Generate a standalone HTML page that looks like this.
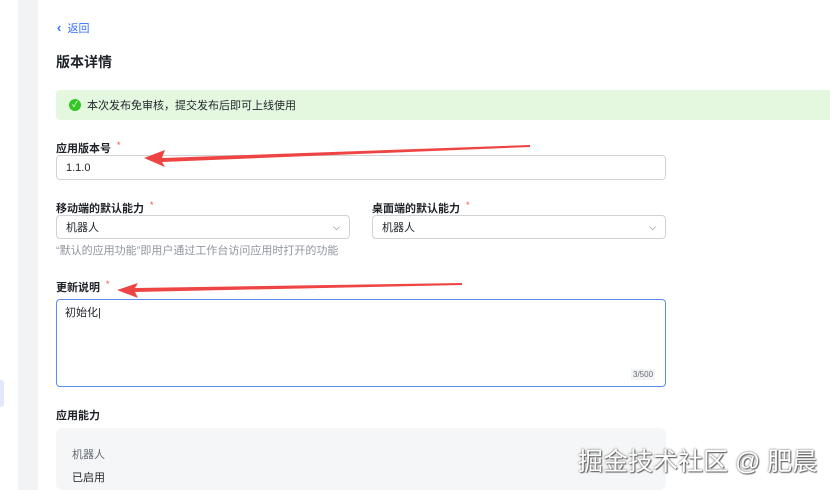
<!DOCTYPE html>
<html><head><meta charset="utf-8"><style>
*{margin:0;padding:0;box-sizing:border-box}
body{width:830px;height:490px;overflow:hidden;background:#fff;position:relative;font-family:"Liberation Sans","Noto Sans CJK SC",sans-serif;color:#1f2329}
.abs{position:absolute}
.lbl{font-size:11px;font-weight:bold;color:#1f2329}
.star{color:#f54a45;font-weight:normal;margin-left:6px;font-size:9px;vertical-align:top}
.box{position:absolute;border:1px solid #d0d3d6;border-radius:4px;background:#fff;font-size:11px;padding-left:9px;display:flex;align-items:center}
</style></head><body>
<div class="abs" style="left:18px;top:0;width:20px;height:490px;background:#f2f3f5"></div>
<div class="abs" style="left:0;top:380px;width:4px;height:27px;background:#e1e8fb;border-radius:0 3px 3px 0"></div>
<div class="abs" style="left:38px;top:0;width:792px;height:490px;background:#fff;border-radius:8px 0 0 0"></div>
<div class="abs" style="left:57px;top:20px;font-size:11px;color:#3370ff"><b style="font-size:13px;line-height:11px">‹</b>&nbsp;&nbsp;返回</div>
<div class="abs" style="left:56px;top:52px;font-size:14px;font-weight:bold">版本详情</div>
<div class="abs" style="left:56px;top:90px;width:774px;height:30px;background:#e4f8e0;border-radius:4px 0 0 4px"></div>
<div class="abs" style="left:69px;top:99px;width:12px;height:12px;border-radius:50%;background:#34c724;color:#fff;font-size:8px;line-height:12px;text-align:center">✓</div>
<div class="abs" style="left:87px;top:97px;font-size:11px">本次发布免审核，提交发布后即可上线使用</div>
<div class="abs lbl" style="left:56px;top:140px">应用版本号<span class="star">*</span></div>
<div class="box" style="left:56px;top:155px;width:610px;height:25px">1.1.0</div>
<div class="abs lbl" style="left:56px;top:200px">移动端的默认能力<span class="star">*</span></div>
<div class="box" style="left:56px;top:215px;width:294px;height:24px">机器人<span style="position:absolute;right:9px;font-size:9px;color:#555">⌵</span></div>
<div class="abs lbl" style="left:372px;top:200px">桌面端的默认能力<span class="star">*</span></div>
<div class="box" style="left:372px;top:215px;width:294px;height:24px">机器人<span style="position:absolute;right:9px;font-size:9px;color:#555">⌵</span></div>
<div class="abs" style="left:56px;top:242px;font-size:11px;color:#8f959e">“默认的应用功能”即用户通过工作台访问应用时打开的功能</div>
<div class="abs lbl" style="left:56px;top:279px">更新说明<span class="star">*</span></div>
<div class="abs" style="left:56px;top:299px;width:610px;height:88px;border:1px solid #5b8def;border-radius:4px;font-size:11px;padding:4px 8px">初始化|</div>
<div class="abs" style="left:631px;top:369px;font-size:8px;color:#646a73;background:#f2f3f5;padding:1px 2px">3/500</div>
<div class="abs" style="left:56px;top:407px;font-size:11px;font-weight:bold">应用能力</div>
<div class="abs" style="left:56px;top:428px;width:610px;height:62px;background:#f5f6f7;border-radius:6px"></div>
<div class="abs" style="left:72px;top:446px;font-size:11px;color:#646a73">机器人</div>
<div class="abs" style="left:72px;top:469px;font-size:11px">已启用</div>
<svg class="abs" style="left:0;top:0" width="830" height="490">
<polygon points="530,145 162,158 162,162 530,147" fill="#ee4444"/>
<polygon points="144,158 165,150 162,158 162,162 165,167" fill="#ee4444"/>
<polygon points="462,283 135,288 135,292 462,285" fill="#ee4444"/>
<polygon points="117,290 138,283 135,288 135,292 138,298" fill="#ee4444"/>
</svg>
<div class="abs" style="left:578px;top:442px;font-size:25px;color:#fff;text-shadow:0 0 2px #555,1px 1px 1px #666">掘金技术社区 @ 肥晨</div>
</body></html>
